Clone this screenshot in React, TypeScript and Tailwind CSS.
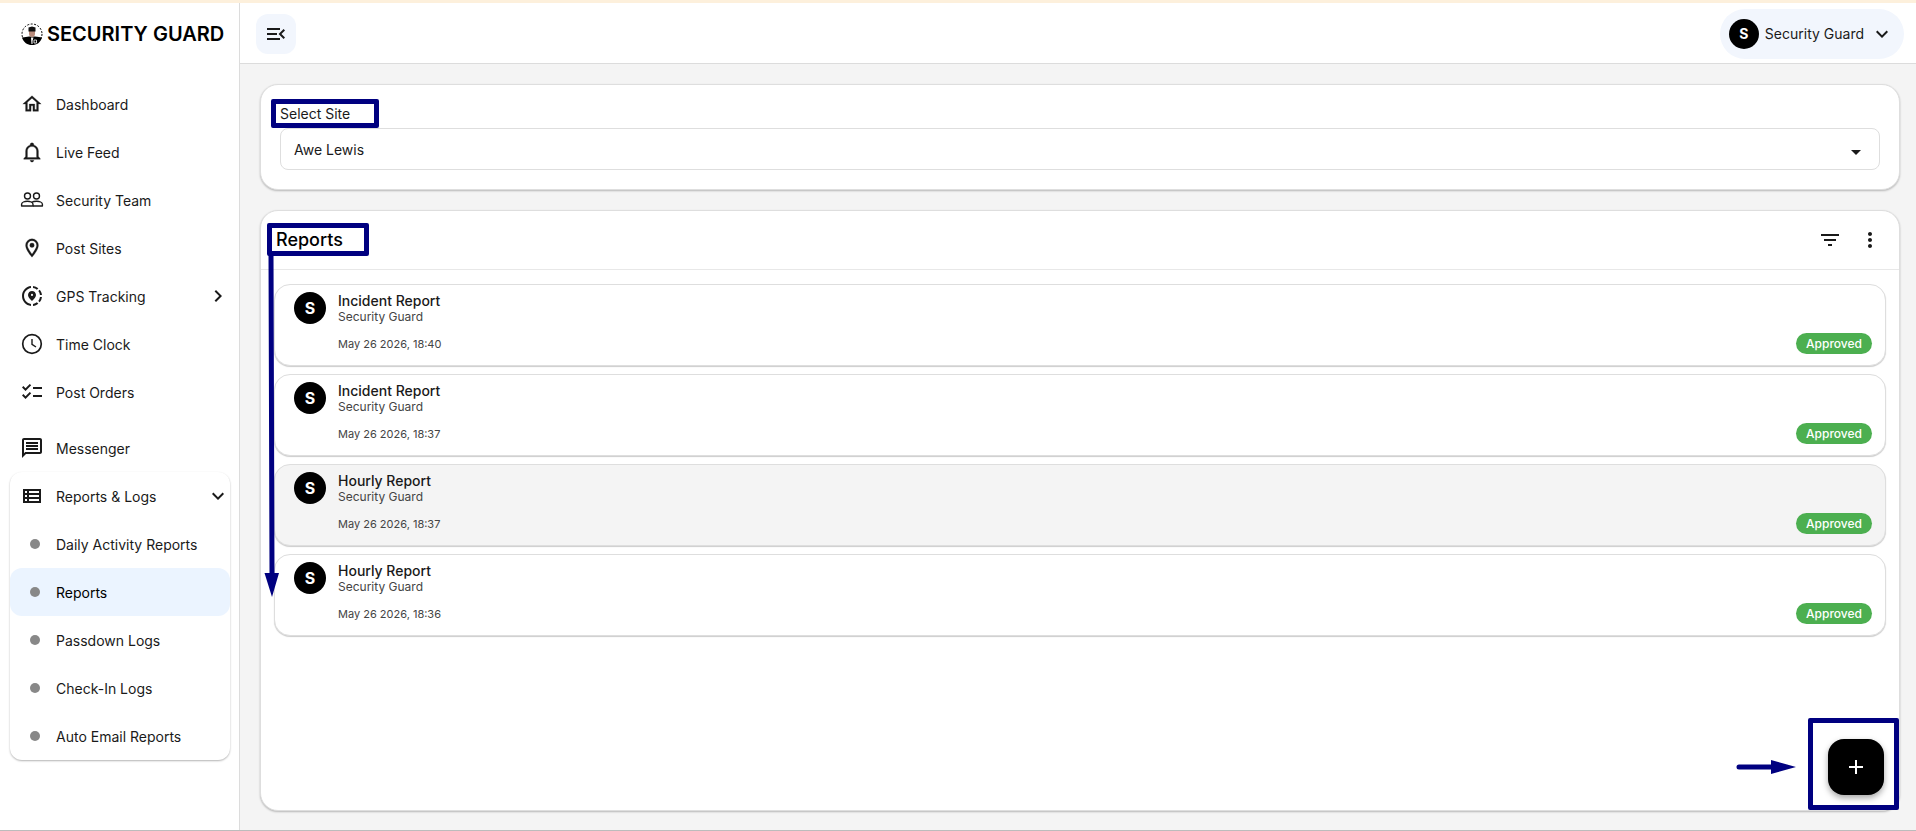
import type { ReactNode } from "react";
import {
  MdArrowDropDown,
  MdChecklist,
  MdExpandMore,
  MdFilterList,
  MdMenuOpen,
  MdMoreVert,
  MdNavigateNext,
  MdOutlineMessage,
  MdOutlineShareLocation,
} from "react-icons/md";

interface NavItem {
  label: string;
  icon: ReactNode;
  trailing?: ReactNode;
}

interface Report {
  title: string;
  author: string;
  date: string;
  highlighted?: boolean;
}

const PathIcon = ({ d }: { d: string }) => (
  <svg
    viewBox="0 0 24 24"
    className="size-[22px]"
    fill="currentColor"
    stroke="currentColor"
    strokeWidth="0.3"
  >
    <path d={d} />
  </svg>
);

const TeamIcon = () => (
  <svg
    viewBox="0 0 24 24"
    className="size-6"
    fill="none"
    stroke="currentColor"
    strokeWidth="1.4"
    strokeLinejoin="round"
  >
    <circle cx="7.500" cy="8" r="3" />
    <circle cx="16.500" cy="8" r="3" />
    <path d="M1.600 18V16.300C1.600 14.400 4.600 13.300 7.300 13.300C10 13.300 13 14.400 13 16.300V18Z" />
    <path d="M11.500 14.300C12.900 13.600 14.900 13.300 16.700 13.300C19.400 13.300 22.400 14.400 22.400 16.300V18H13" />
  </svg>
);

const ClockIcon = () => (
  <svg viewBox="0 0 24 24" className="size-6" fill="none" stroke="currentColor">
    <circle cx="12" cy="12" r="9.300" strokeWidth="1.700" />
    <path d="M12 7V12.300L16 15" strokeWidth="1.400" />
  </svg>
);

const LogsIcon = () => (
  <svg viewBox="0 0 24 24" className="size-6" fill="currentColor">
    <path
      fillRule="evenodd"
      d="M3 5H21V19H3ZM5 7V9H7V7ZM9 7V9H19V7ZM5 11V13H7V11ZM9 11V13H19V11ZM5 15V17H7V15ZM9 15V17H19V15Z"
    />
  </svg>
);

const mainNav: NavItem[] = [
  {
    label: "Dashboard",
    icon: (
      <PathIcon d="M12 5.69L17 10.19V18H15V12H9V18H7V10.19L12 5.69M12 3L2 12H5V20H11V14H13V20H19V12H22L12 3Z" />
    ),
  },
  {
    label: "Live Feed",
    icon: (
      <PathIcon d="M10 21H14C14 22.1 13.1 23 12 23S10 22.1 10 21M21 19V20H3V19L5 17V11C5 7.9 7.03 5.17 10 4.29V4C10 2.9 10.9 2 12 2S14 2.9 14 4V4.29C16.97 5.17 19 7.9 19 11V17L21 19M17 11C17 8.24 14.76 6 12 6S7 8.24 7 11V18H17V11Z" />
    ),
  },
  { label: "Security Team", icon: <TeamIcon /> },
  {
    label: "Post Sites",
    icon: (
      <PathIcon d="M12 6.5A2.5 2.5 0 0 1 14.5 9A2.5 2.5 0 0 1 12 11.5A2.5 2.5 0 0 1 9.5 9A2.5 2.5 0 0 1 12 6.5M12 2A7 7 0 0 1 19 9C19 14.25 12 22 12 22C12 22 5 14.25 5 9A7 7 0 0 1 12 2M12 4A5 5 0 0 0 7 9C7 10 7 12 12 18.71C17 12 17 10 17 9A5 5 0 0 0 12 4Z" />
    ),
  },
  {
    label: "GPS Tracking",
    icon: <MdOutlineShareLocation className="size-6" />,
    trailing: <MdNavigateNext className="size-6" />,
  },
  { label: "Time Clock", icon: <ClockIcon /> },
  { label: "Post Orders", icon: <MdChecklist className="size-6" /> },
];

const logNav = [
  "Daily Activity Reports",
  "Reports",
  "Passdown Logs",
  "Check-In Logs",
  "Auto Email Reports",
];

const reports: Report[] = [
  { title: "Incident Report", author: "Security Guard", date: "May 26 2026, 18:40" },
  { title: "Incident Report", author: "Security Guard", date: "May 26 2026, 18:37" },
  { title: "Hourly Report", author: "Security Guard", date: "May 26 2026, 18:37", highlighted: true },
  { title: "Hourly Report", author: "Security Guard", date: "May 26 2026, 18:36" },
];

const NavLink = ({ label, icon, trailing }: NavItem) => (
  <a href="#" className="flex h-12 items-center rounded-xl pl-[10px]">
    <span className="flex w-6 justify-center">{icon}</span>
    <span className="ml-3 flex-1 pt-[2px]">{label}</span>
    {trailing}
  </a>
);

const Logo = () => (
  <svg viewBox="0 0 22 22" className="size-[22px]">
    <circle cx="11" cy="11" r="10" fill="#fff" stroke="#000" strokeDasharray="2 1.500" />
    <path d="M1 14.500C4 14 6 14 8 13.500H14C17 14 19 14 21 14.500C19.500 19.500 16 22 11 22C6.500 22 2.500 19.500 1 14.500Z" fill="#000" />
    <path d="M8 8H14V11C14 15 8 15 8 11Z" fill="#b98c7c" />
    <path d="M7.500 4.500L11 3.500L14.500 4.500V8.500H7.500Z" fill="#111" />
    <path d="M10 14.500H12.500L11.500 18V21H10.500Z" fill="#fff" />
    <path d="M13 17H15.500V20H13Z" fill="none" stroke="#fff" strokeWidth="0.800" />
  </svg>
);

const Sidebar = () => (
  <aside className="flex w-60 shrink-0 flex-col border-r border-[#dcdcdc] bg-white">
    <div className="flex h-[61px] items-center gap-1 pl-[21px]">
      <Logo />
      <span className="text-[20px] leading-6 font-semibold whitespace-nowrap text-black">
        SECURITY GUARD
      </span>
    </div>
    <nav className="mt-4 pr-[9px] pl-[10px]">
      {mainNav.map((item) => (
        <NavLink key={item.label} {...item} />
      ))}
      <div className="mt-2">
        <NavLink label="Messenger" icon={<MdOutlineMessage className="size-6" />} />
      </div>
      <div className="rounded-xl shadow-[0_1px_2px_rgba(0,0,0,0.3)]">
        <NavLink
          label="Reports & Logs"
          icon={<LogsIcon />}
          trailing={<MdExpandMore className="size-6" />}
        />
        {logNav.map((label) => (
          <a
            key={label}
            href="#"
            className={`flex h-12 items-center gap-4 rounded-xl pl-5 ${
              label === "Reports" ? "bg-[#ebf4ff] text-black" : ""
            }`}
          >
            <span className="size-[10px] rounded-full bg-[#888888]" />
            <span className="pt-[2px]">{label}</span>
          </a>
        ))}
      </div>
    </nav>
  </aside>
);

const Header = () => (
  <header className="flex h-[61px] shrink-0 items-center justify-between border-b border-[#dcdcdc] bg-white pt-[2px] pr-3 pl-4">
    <button
      aria-label="Toggle menu"
      className="flex size-10 items-center justify-center rounded-xl bg-[#f2f6fd]"
    >
      <MdMenuOpen className="size-6" />
    </button>
    <button className="flex h-[50px] items-center rounded-full bg-[#f2f6fd] pr-[10px] pl-[9px]">
      <span className="flex size-[30px] items-center justify-center rounded-full bg-black text-sm font-bold text-white">
        S
      </span>
      <span className="ml-[6px]">Security Guard</span>
      <MdExpandMore className="ml-[6px] size-6" />
    </button>
  </header>
);

const SiteCard = () => (
  <section className="shrink-0 rounded-[18px] border border-[#dedede] bg-white px-[19px] pt-[19px] pb-[19px] shadow-[0_1px_2px_rgba(0,0,0,0.25)]">
    <label htmlFor="site" className="relative block h-6 leading-5">
      Select Site
      {/* callout around the label */}
      <span className="absolute -top-[5px] -left-[9px] h-[29px] w-[108px] rounded-xs border-5 border-[#000080]" />
    </label>
    <div className="relative">
      <select
        id="site"
        className="h-[42px] w-full appearance-none rounded-lg border border-[#dedede] bg-white px-[13px] pt-[2px]"
      >
        <option>Awe Lewis</option>
      </select>
      <MdArrowDropDown className="pointer-events-none absolute top-3 right-3 size-6" />
    </div>
  </section>
);

const ReportCard = ({ title, author, date, highlighted }: Report) => (
  <li
    className={`flex h-[82px] items-start rounded-2xl border border-[#dedede] pt-[7px] pr-[13px] pb-[11px] pl-[19px] shadow-[0_1px_1px_rgba(0,0,0,0.2)] ${
      highlighted ? "bg-[#f4f4f4]" : "bg-white"
    }`}
  >
    <span className="flex size-8 items-center justify-center rounded-full bg-black text-base font-bold text-white">
      S
    </span>
    <div className="ml-3">
      <h3 className="leading-[18px] font-medium">{title}</h3>
      <p className="text-xs leading-[14px] text-[#444444]">{author}</p>
      <time className="mt-3 block text-[11px] leading-4 text-[#444444]">{date}</time>
    </div>
    <span className="ml-auto self-end rounded-full bg-[#4caf50] px-[10px] text-xs leading-[21px] font-medium text-white">
      Approved
    </span>
  </li>
);

const ReportsCard = () => (
  <section className="relative flex-1 rounded-[18px] border border-[#dedede] bg-white shadow-[0_1px_2px_rgba(0,0,0,0.25)]">
    <div className="flex h-[59px] items-center border-b border-[#e8e8e8] pr-[17px] pl-[15px]">
      <h2 className="relative text-lg leading-7 font-medium text-black">
        Reports
        {/* callout around the heading */}
        <span className="absolute -top-[3px] -left-[9px] h-[33px] w-[102px] rounded-xs border-5 border-[#000080]" />
      </h2>
      <button aria-label="Filter" className="ml-auto">
        <MdFilterList className="size-6" />
      </button>
      <button aria-label="More" className="ml-4">
        <MdMoreVert className="size-6" />
      </button>
    </div>
    <ul className="flex flex-col gap-2 px-[13px] pt-[14px]">
      {reports.map((report, i) => (
        <ReportCard key={i} {...report} />
      ))}
    </ul>
    {/* arrow running down the list */}
    <svg
      viewBox="0 0 16 344"
      className="absolute top-[43px] left-[3px] h-[344px] w-4"
      fill="#000080"
    >
      <path d="M4.500 0H9.500L10.500 319H15L8 343L0.500 319H5.500Z" />
    </svg>
    <div className="absolute right-0 bottom-0 flex items-center gap-3">
      <svg viewBox="0 0 60 22" className="h-[22px] w-[60px]" fill="#000080">
        <path d="M3 11.500H35V7L60 14L35 21V16.500H3A2.500 2.500 0 0 1 3 11.500Z" />
      </svg>
      <div className="flex h-[92px] w-[91px] items-center justify-end rounded-xs border-5 border-[#000080] pt-[6px] pr-[10px]">
        <button
          aria-label="Add report"
          className="flex size-14 items-center justify-center rounded-2xl bg-black text-white shadow-[0_3px_6px_rgba(0,0,0,0.35)]"
        >
          <svg viewBox="0 0 24 24" className="size-6" stroke="currentColor" strokeWidth="2">
            <path d="M5 12H19M12 5V19" />
          </svg>
        </button>
      </div>
    </div>
  </section>
);

const App = () => {
  return (
    <div className="flex min-h-screen flex-col border-t-3 border-b border-t-[#fdf0dc] border-b-[#bcbcbc] bg-[#f4f4f4] font-['Inter',sans-serif] text-sm text-[#1a1a1a]">
      <div className="flex flex-1">
        <Sidebar />
        <div className="flex min-w-0 flex-1 flex-col">
          <Header />
          <main className="flex flex-1 flex-col gap-5 pt-5 pr-4 pb-[19px] pl-5">
            <SiteCard />
            <ReportsCard />
          </main>
        </div>
      </div>
    </div>
  );
};

export default App;
